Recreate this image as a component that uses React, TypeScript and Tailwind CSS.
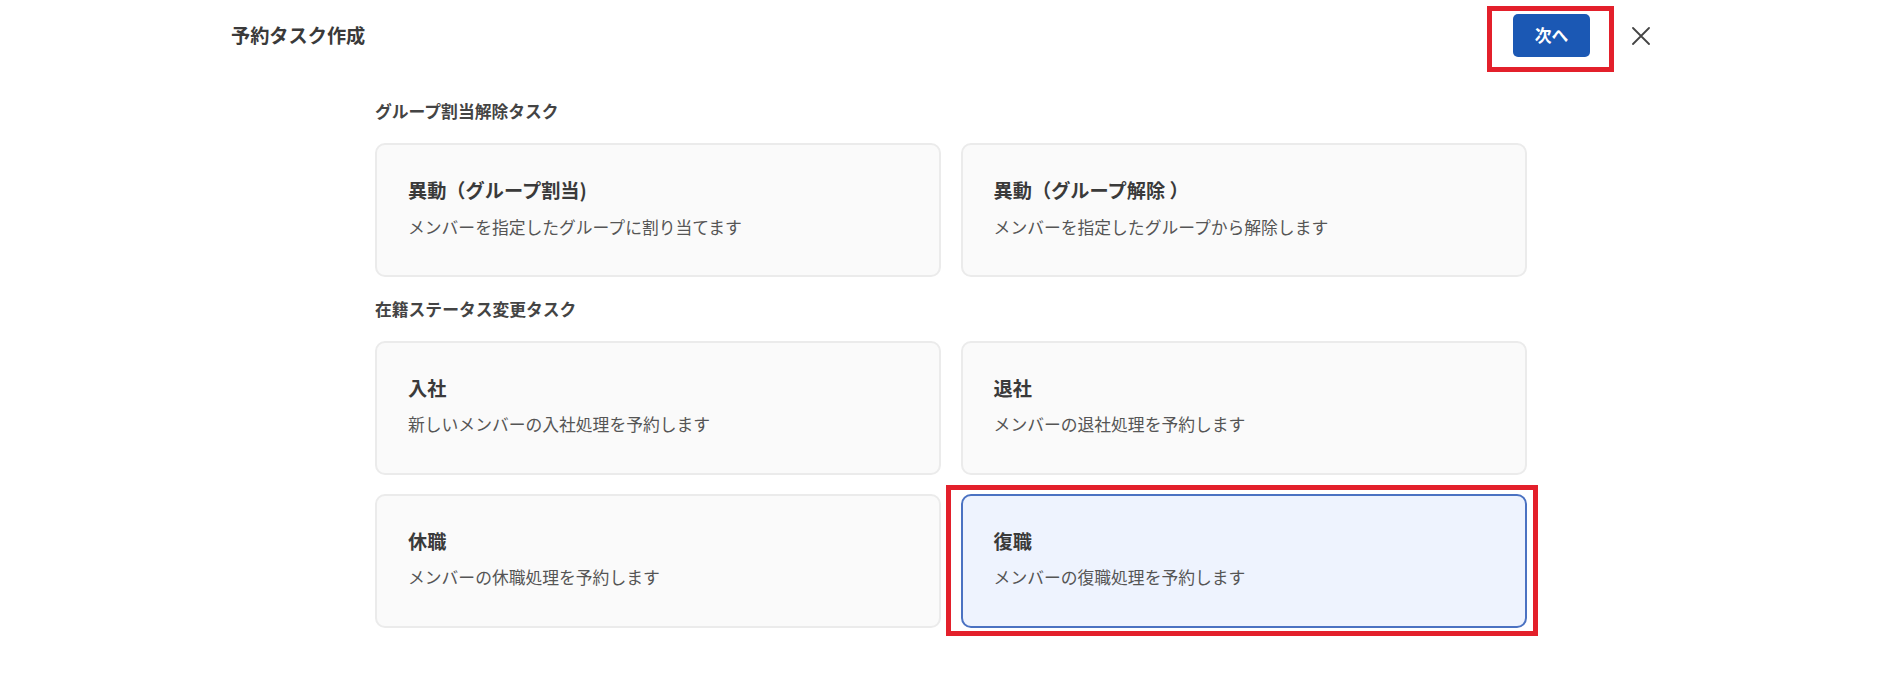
import { useState } from "react";

type TaskItem = {
  id: string;
  title: string;
  description: string;
};

type TaskGroup = {
  label: string;
  items: TaskItem[];
};

const groups: TaskGroup[] = [
  {
    label: "グループ割当解除タスク",
    items: [
      {
        id: "assign",
        title: "異動（グループ割当)",
        description: "メンバーを指定したグループに割り当てます",
      },
      {
        id: "unassign",
        title: "異動（グループ解除 ）",
        description: "メンバーを指定したグループから解除します",
      },
    ],
  },
  {
    label: "在籍ステータス変更タスク",
    items: [
      { id: "join", title: "入社", description: "新しいメンバーの入社処理を予約します" },
      { id: "leave", title: "退社", description: "メンバーの退社処理を予約します" },
      { id: "suspend", title: "休職", description: "メンバーの休職処理を予約します" },
      { id: "resume", title: "復職", description: "メンバーの復職処理を予約します" },
    ],
  },
];

function CloseIcon() {
  return (
    <svg width="18" height="18" viewBox="0 0 18 18" fill="none" aria-hidden="true">
      <path d="M1 1L17 17M17 1L1 17" stroke="#444" strokeWidth="1.8" strokeLinecap="round" />
    </svg>
  );
}

function TaskCard({
  item,
  selected,
  onSelect,
}: {
  item: TaskItem;
  selected: boolean;
  onSelect: () => void;
}) {
  return (
    <div className="relative">
      <button
        type="button"
        onClick={onSelect}
        className={
          selected
            ? "box-border flex h-[134px] w-full flex-col items-start rounded-[10px] border-2 border-[#4b72c2] bg-[#eef3fe] px-[31px] pt-[31px] text-left"
            : "box-border flex h-[134px] w-full flex-col items-start rounded-[10px] border-2 border-[#ebebeb] bg-[#fafafa] px-[31px] pt-[31px] text-left"
        }
      >
        <span className="text-[19.2px] leading-[1.5] font-semibold text-[#3a3a3a]">{item.title}</span>
        <span className="mt-[9.5px] text-[16.8px] leading-[1.5] text-[#555]">{item.description}</span>
      </button>
      {selected && (
        <div className="pointer-events-none absolute -top-[9px] -right-[11px] -bottom-[8px] -left-[15px] border-[5px] border-[#e3202b]" />
      )}
    </div>
  );
}

export default function App() {
  const [selected, setSelected] = useState("resume");

  return (
    <div className="min-h-screen bg-white font-['Noto_Sans_CJK_JP','Noto_Sans',sans-serif] text-[#333]">
      <header className="mx-auto flex h-[71px] w-[1440px] items-center justify-between">
        <h1 className="text-[19.2px] leading-[1.5] font-bold text-[#3a3a3a]">予約タスク作成</h1>
        <div className="mr-[10px] flex items-center">
          <div className="relative">
            <button
              type="button"
              className="h-[43px] w-[77px] rounded-[5px] bg-[#1b58b4] text-[16.8px] font-bold text-white"
            >
              次へ
            </button>
            <div className="pointer-events-none absolute -top-[8px] -right-[24px] -bottom-[15px] -left-[26px] border-[5px] border-[#e3202b]" />
          </div>
          <button
            type="button"
            aria-label="閉じる"
            className="ml-[31px] flex h-[40px] w-[40px] items-center justify-center"
          >
            <CloseIcon />
          </button>
        </div>
      </header>

      <main className="mx-auto flex w-[1152px] flex-col gap-[19.2px] pt-[28px]">
        {groups.map((group) => (
          <section key={group.label} className="flex flex-col gap-[19.2px]">
            <h2 className="text-[16.8px] leading-[1.5] font-bold text-[#444]">{group.label}</h2>
            <div className="grid grid-cols-2 gap-[19.2px]">
              {group.items.map((item) => (
                <TaskCard
                  key={item.id}
                  item={item}
                  selected={selected === item.id}
                  onSelect={() => setSelected(item.id)}
                />
              ))}
            </div>
          </section>
        ))}
      </main>
    </div>
  );
}
